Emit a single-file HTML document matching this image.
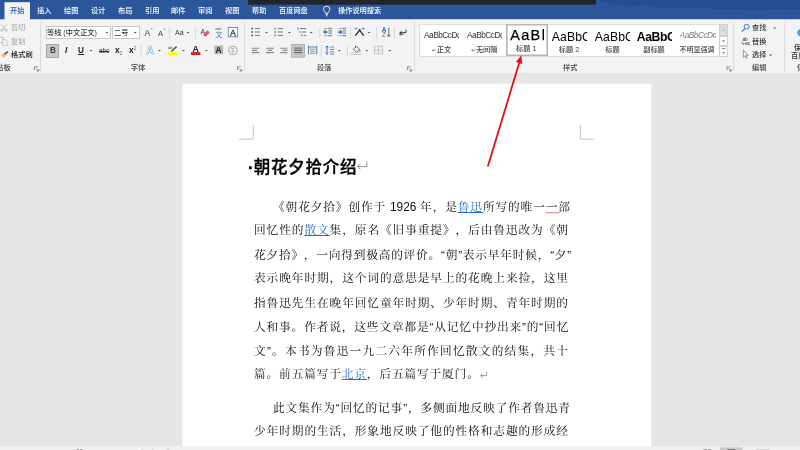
<!DOCTYPE html>
<html lang="zh-CN">
<head>
<meta charset="utf-8">
<title>朝花夕拾介绍 - Word</title>
<style>
html,body{margin:0;padding:0;}
*{-webkit-font-smoothing:antialiased;}
.rt,.tab,.glabel,.h1,.ln,.sty,svg{will-change:transform;}
body{width:800px;height:450px;overflow:hidden;position:relative;background:#e6e6e6;font-family:"Liberation Sans","Noto Sans CJK SC",sans-serif;color:#333;}
.abs{position:absolute;}
.tab{position:absolute;top:5.8px;font-weight:500;font-size:7.2px;line-height:10px;color:#fff;white-space:nowrap;}
.tab.on{color:#2b579a;}
.sep{position:absolute;width:1px;background:#d2d2d2;}
.glabel{position:absolute;top:63.2px;font-weight:500;font-size:7.2px;line-height:10px;color:#444;white-space:nowrap;}
.rt{position:absolute;font-weight:500;font-size:7.2px;line-height:10px;color:#333;white-space:nowrap;}

.dis{color:#b2b2b2;}
.box{position:absolute;background:#fff;border:0.8px solid #c8c8c8;box-sizing:border-box;}
.pressed{position:absolute;background:#c8c8c8;border:0.8px solid #a6a6a6;box-sizing:border-box;}
#gallery{position:absolute;left:419.2px;top:23.6px;width:308px;height:33.8px;background:#fff;border:0.6px solid #dedede;box-sizing:border-box;}
.sty{position:absolute;top:24.4px;width:40.4px;height:32px;overflow:hidden;}
.sty.sel{border:0;padding:1.6px;box-shadow:inset 0 0 0 1.6px #b7b7b7;background:#fff;box-sizing:border-box;}
.sty .pv{position:absolute;white-space:nowrap;overflow:hidden;line-height:12px;font-family:"Liberation Sans",sans-serif;}
.sty .nm{font-weight:500;position:absolute;left:0;width:100%;top:20.6px;text-align:center;font-size:7.2px;line-height:10px;color:#444;white-space:nowrap;}
.sty .ar{font-family:"DejaVu Sans",sans-serif;font-size:5px;color:#4a4a4a;position:relative;left:1.6px;}
.gsb{position:absolute;left:719.4px;width:8.2px;background:#fff;border:0.6px solid #d0d0d0;box-sizing:border-box;}
.h1{position:absolute;left:247.8px;top:155.2px;font:500 16.5px/24px "Liberation Sans","Noto Sans CJK SC",sans-serif;color:#000;white-space:nowrap;-webkit-text-stroke:0.35px #000;letter-spacing:0.75px;}
.h1 .dot{font-weight:900;letter-spacing:0.3px;}
.ln{position:absolute;left:254.2px;width:314.85px;height:24px;letter-spacing:0.85px;font:11.7px/24px "Liberation Serif","Noto Serif CJK SC",serif;color:#0d0d0d;white-space:nowrap;text-align:justify;text-align-last:justify;text-spacing-trim:space-all;}
.ln a{color:#1f6ec4;text-decoration:underline;}
.ln .q{font-family:"Liberation Sans",sans-serif;}
.ln .n{font-family:"Liberation Sans",sans-serif;display:inline-block;letter-spacing:0;font-size:13.2px;transform:scaleX(0.9);transform-origin:0 50%;margin-right:-2.95px;}
</style>
</head>
<body>
<svg id="bg" class="abs" style="left:0;top:0" width="800" height="450" viewBox="0 0 800 450">
<rect x="0" y="0" width="800" height="19.5" fill="#2b579a"/>
<rect x="0" y="19.5" width="800" height="53.3" fill="#f3f3f3"/>
<rect x="4.5" y="2.2" width="25.5" height="18" fill="#f3f3f3"/>
<rect x="248" y="0" width="348" height="4.7" fill="#23252e"/>
<rect x="182.5" y="83.7" width="468.7" height="363" fill="#ffffff"/>
<rect x="0" y="446.4" width="800" height="4" fill="#f1f1f1"/>
</svg>
<span class="tab on" style="left:10.0px">开始</span>
<span class="tab" style="left:36.9px">插入</span>
<span class="tab" style="left:63.8px">绘图</span>
<span class="tab" style="left:90.7px">设计</span>
<span class="tab" style="left:117.6px">布局</span>
<span class="tab" style="left:144.5px">引用</span>
<span class="tab" style="left:171.4px">邮件</span>
<span class="tab" style="left:198.3px">审阅</span>
<span class="tab" style="left:225.2px">视图</span>
<span class="tab" style="left:252.1px">帮助</span>
<span class="tab" style="left:279.0px">百度网盘</span>
<span class="tab" style="left:337.5px">操作说明搜索</span>

<!-- clipboard group -->
<span class="rt dis" style="left:11px;top:23px">剪切</span>
<span class="rt dis" style="left:11px;top:36.8px">复制</span>
<span class="rt" style="left:11px;top:50px;color:#222">格式刷</span>
<span class="glabel" style="left:-11.2px">剪贴板</span>
<!-- font group -->
<div class="box" style="left:46px;top:26px;width:64.5px;height:13.4px"></div>
<span class="rt" style="left:47.4px;top:27.8px">等线 (中文正文)</span>
<div class="box" style="left:112.2px;top:26px;width:27.5px;height:13.4px"></div>
<span class="rt" style="left:113.8px;top:27.8px">二号</span>
<span class="rt" style="left:174.6px;top:27.6px;font-size:7px">Aa</span>
<div class="pressed" style="left:46px;top:44px;width:12.8px;height:13.5px"></div>
<span class="rt" style="left:49.6px;top:45.6px;font-size:8.2px;font-weight:bold;color:#3a3a3a">B</span>
<span class="rt" style="left:65px;top:45.6px;font-size:8.2px;font-weight:bold;font-style:italic;color:#222">I</span>
<span class="rt" style="left:77.6px;top:45.6px;font-size:8.2px;font-weight:bold;color:#222;text-decoration:underline">U</span>
<span class="rt" style="left:98.6px;top:46px;font-size:6.4px;color:#333;text-decoration:line-through">abc</span>
<span class="rt" style="left:115px;top:45.4px;font-size:8.4px;font-weight:bold;color:#222">x<span style="font-size:4.5px;font-weight:normal;color:#2b6cc4;position:relative;top:1.5px">2</span></span>
<span class="rt" style="left:129px;top:45.4px;font-size:8.4px;font-weight:bold;color:#222">x<span style="font-size:4.5px;font-weight:normal;color:#2b6cc4;position:relative;top:-3.5px">2</span></span>
<span class="glabel" style="left:130.6px">字体</span>
<span class="glabel" style="left:317.2px">段落</span>
<span class="glabel" style="left:562.5px">样式</span>
<span class="glabel" style="left:752.2px">编辑</span>
<!-- edit group -->
<span class="rt" style="left:752.2px;top:23.2px">查找</span>
<span class="rt" style="left:752.2px;top:36.5px">替换</span>
<span class="rt" style="left:752.2px;top:50.2px">选择</span>
<span class="rt" style="left:794.4px;top:42.8px">保存</span>
<span class="rt" style="left:790.8px;top:51.2px">百度</span>
<span class="glabel" style="left:797px">保存</span>

<div id="gallery"></div>
<div class="sty" style="left:421px"><span class="pv" style="font-size:8.3px;letter-spacing:-0.5px;left:3px;top:5.2px;width:35.4px;color:#333">AaBbCcDd</span><span class="nm" style="left:-0.4px"><span class="ar">↵</span> 正文</span></div>
<div class="sty" style="left:464px"><span class="pv" style="font-size:8.3px;letter-spacing:-0.5px;left:3px;top:5.2px;width:35px;color:#333">AaBbCcDd</span><span class="nm" style="left:-0.6px"><span class="ar">↵</span> 无间隔</span></div>
<div class="sty sel" style="left:505.6px;top:24.4px;width:42.2px;height:31.9px"><span class="pv" style="font-size:14.5px;letter-spacing:1.35px;left:4.2px;top:-0.5px;width:33.8px;color:#000;line-height:22px;-webkit-text-stroke:0.25px #000">AaBb</span><span class="nm" style="top:20px;left:-0.8px">标题 1</span></div>
<div class="sty" style="left:549px"><span class="pv" style="font-size:12.2px;letter-spacing:0.1px;left:2.8px;top:5.2px;width:35px;color:#000;line-height:16px">AaBbCc</span><span class="nm" style="left:-0.2px">标题 2</span></div>
<div class="sty" style="left:591.5px"><span class="pv" style="font-size:12.2px;letter-spacing:0.1px;left:2.8px;top:5.2px;width:35px;color:#000;line-height:16px">AaBbCc</span><span class="nm" style="left:0.2px">标题</span></div>
<div class="sty" style="left:634px"><span class="pv" style="font-size:12.2px;left:2.8px;top:5.2px;width:35px;color:#000;line-height:16px;font-weight:bold;letter-spacing:-0.4px">AaBbCc</span><span class="nm" style="left:-0.2px">副标题</span></div>
<div class="sty" style="left:676.5px"><span class="pv" style="font-size:8.3px;letter-spacing:-0.5px;left:2.6px;top:5.2px;width:36px;color:#7c7c7c;font-style:italic">AaBbCcDd</span><span class="nm" style="left:-0.2px;font-size:7.05px">不明显强调</span></div>
<div class="gsb" style="top:23.8px;height:11.8px;background:#dcdcdc"></div>
<div class="gsb" style="top:35.6px;height:10.6px"></div>
<div class="gsb" style="top:46.2px;height:11px"></div>
<svg id="icons" class="abs" style="left:0;top:0" width="800" height="75" viewBox="0 0 800 75" font-family="Liberation Sans, sans-serif">
<!-- title bar clouds -->
<path d="M597 0H800V9.2C790 10.4 778 8.2 768 9.4C756 10.6 742 8.8 730 9.6C718 10.2 706 7.4 694 8.2C682 8.8 668 7.6 658 7.8C650 7.2 648 4.2 640 5.4C630 6.6 618 5.6 610 3.4C604 2 600 0.8 597 0Z" fill="#254a8c" opacity="0.75"/>
<!-- lightbulb -->
<g fill="none" stroke="#fff" stroke-width="0.9">
<path d="M325.4 13.2 C325.2 12 323.6 11 323.6 9.2 A3.1 3.1 0 0 1 329.8 9.2 C329.8 11 328.2 12 328 13.2 Z"/>
<path d="M325.6 14.5 H327.8 M326 15.8 H327.4"/>
</g>
<!-- separators -->
<g stroke="#d6d6d6" stroke-width="0.9" fill="none">
<path d="M40.6 22.5V71 M244.6 22.5V71 M414.6 22.5V71 M733.8 22.5V71 M784.6 22.5V71"/>
<path d="M169.4 27V38.6 M195.4 27V38.6 M319.8 27V38.6 M350.6 27V38.6 M376.5 27V38.6 M394.4 27V38.6"/>
<path d="M141.2 45V56.4 M321.2 45V56.4 M347.5 45V56.4"/>
</g>
<!-- dropdown arrows -->
<g fill="#555">
<path id="dd" d="M-1.45 -0.7 H1.45 L0 0.85 Z" transform="translate(106.9 32.6)"/>
<use href="#dd" x="28.35" y="0"/>
<use href="#dd" x="81.1" y="0"/>
<use href="#dd" x="159.6" y="0"/>
<use href="#dd" x="182.5" y="0"/>
<use href="#dd" x="204.35" y="0"/>
<use href="#dd" x="262.1" y="0"/>
<use href="#dd" x="-15.9" y="18"/>
<use href="#dd" x="52.5" y="18"/>
<use href="#dd" x="76.6" y="18"/>
<use href="#dd" x="99.6" y="18"/>
<use href="#dd" x="232.5" y="18"/>
<use href="#dd" x="259.8" y="18"/>
<use href="#dd" x="282.85" y="18"/>
<use href="#dd" x="667.85" y="-4.4"/>
<use href="#dd" x="663.7" y="22.7"/>
<!-- gallery scroll arrows -->
<use href="#dd" x="616.6" y="8.6" />
<use href="#dd" x="616.6" y="20.4" />
</g>
<path d="M721.6 48.6H725.4" stroke="#555" stroke-width="0.7"/>
<path d="M-1.5 0.8 H1.5 L0 -0.8 Z" transform="translate(723.5 29.6)" fill="#b8b8b8"/>
<!-- dialog launchers -->
<g fill="none" stroke="#666" stroke-width="0.7">
<path id="dl" d="M0 3.4V0H3.4 M1.6 1.6L4.2 4.2 M4.3 2.2V4.3H2.2" transform="translate(34.4 66.8)"/>
<use href="#dl" x="203" y="0"/>
<use href="#dl" x="373" y="0"/>
<use href="#dl" x="692.6" y="0"/>
</g>
<!-- scissors (disabled) -->
<g fill="none" stroke="#b9b9b9" stroke-width="0.9">
<path d="M1.4 24.4L5.6 29.4 M6.6 24.4L2.4 29.4"/>
<circle cx="1.9" cy="30.2" r="1.1"/><circle cx="6.1" cy="30.2" r="1.1"/>
</g>
<!-- copy (disabled) -->
<g fill="#f3f3f3" stroke="#b9b9b9" stroke-width="0.8">
<path d="M-0.5 37.4H3.6V43H-0.5Z"/>
<path d="M2.6 39.6H5.4L7.2 41.4V45.6H2.6Z"/>
</g>
<!-- format painter -->
<path d="M1.2 55.4L3.6 53L6 55.4L3.8 57.8Z" fill="#f0b64a"/>
<path d="M4.6 54.2L7.8 51.6" stroke="#444" stroke-width="1.5" fill="none"/>
<!-- grow / shrink font -->
<text x="144.4" y="36" font-size="8.6" fill="#444">A</text>
<path d="M150.7 29.4L151.6 28.3L152.5 29.4" fill="none" stroke="#3a5f96" stroke-width="0.6"/>
<text x="157.9" y="36" font-size="7.6" fill="#444">A</text>
<path d="M163.6 28.4L164.5 29.5L165.4 28.4" fill="none" stroke="#3a5f96" stroke-width="0.6"/>
<!-- clear formatting -->
<text x="200.6" y="34" font-size="7" fill="#333">A</text>
<path d="M207.4 30.2L209.8 32.6L205.4 37L203 34.6Z" fill="#ea5a78"/>
<!-- phonetic guide -->
<text x="215.2" y="30.2" font-size="3.4" fill="#444">wén</text>
<text x="215.4" y="36.8" font-size="6.8" fill="#3b78c8" font-family="Liberation Sans, Noto Sans CJK SC, sans-serif">文</text>
<!-- char border -->
<rect x="228.3" y="27.5" width="9.3" height="9.3" fill="#fff" stroke="#5a8fcf" stroke-width="0.9"/>
<text x="232.95" y="35.5" font-size="8.8" fill="#222" stroke="#222" stroke-width="0.25" text-anchor="middle">A</text>
<!-- text effects A -->
<text x="150" y="53.9" font-size="10" font-weight="bold" fill="#fff" stroke="#5d98de" stroke-width="0.5" text-anchor="middle">A</text>
<!-- highlight -->
<text x="168" y="48.6" font-size="4" fill="#333">ab</text>
<path d="M176.6 46.6L171.4 51.6" stroke="#444" stroke-width="1.4" fill="none"/>
<rect x="168" y="52.3" width="9.5" height="3" fill="#ffff00"/>
<!-- font color -->
<text x="195.8" y="51.6" font-size="8.8" font-weight="bold" fill="#222" text-anchor="middle">A</text>
<rect x="191" y="52.1" width="9.3" height="2.9" fill="#d8202a"/>
<!-- char shading -->
<rect x="214.4" y="45.6" width="8.6" height="8.5" fill="#b4b4b4"/>
<text x="218.7" y="53" font-size="8.6" font-weight="bold" fill="#222" text-anchor="middle">A</text>
<!-- enclosed char -->
<circle cx="232.9" cy="50.4" r="4.1" fill="none" stroke="#7c7c7c" stroke-width="0.7"/>
<text x="232.9" y="52.3" font-size="4.8" fill="#777" text-anchor="middle" font-family="Liberation Sans, Noto Sans CJK SC, sans-serif">字</text>
<!-- bullets -->
<g fill="#3c4a5e"><rect x="251.3" y="27.8" width="1.6" height="1.6"/><rect x="251.3" y="31.2" width="1.6" height="1.6"/><rect x="251.3" y="34.6" width="1.6" height="1.6"/></g>
<path d="M254.8 28.6H260 M254.8 32H260 M254.8 35.4H260" stroke="#7a7a7a" stroke-width="1"/>
<!-- numbering -->
<g fill="#2b6cc4"><rect x="274.6" y="27.6" width="0.9" height="2.2"/><rect x="274.6" y="31" width="0.9" height="2.2"/><rect x="274.6" y="34.4" width="0.9" height="2.2"/></g>
<path d="M277.6 28.6H283 M277.6 32H283 M277.6 35.4H283" stroke="#7a7a7a" stroke-width="1"/>
<!-- multilevel -->
<g fill="#2b6cc4"><rect x="297.6" y="27.6" width="0.9" height="2.2"/><rect x="299.6" y="31" width="0.9" height="2"/><rect x="301.4" y="34.4" width="0.9" height="2"/></g>
<path d="M300 28.6H306.2 M302 32H306.2 M303.8 35.4H306.2" stroke="#7a7a7a" stroke-width="1"/>
<!-- decrease indent -->
<path d="M323.6 28.5H332 M323.6 35.6H332" stroke="#b0b0b0" stroke-width="0.9"/><path d="M328.4 28.5H332 M328.4 30.9H332 M328.4 33.2H332 M328.4 35.6H332" stroke="#8e8e8e" stroke-width="1.3"/>
<path d="M327.8 32.05H324 M325.8 30.2L323.9 32.05L325.8 33.9" stroke="#2b6cc4" stroke-width="1.2" fill="none"/>
<!-- increase indent -->
<path d="M337.8 28.5H346.2 M337.8 35.6H346.2" stroke="#b0b0b0" stroke-width="0.9"/><path d="M342.6 28.5H346.2 M342.6 30.9H346.2 M342.6 33.2H346.2 M342.6 35.6H346.2" stroke="#8e8e8e" stroke-width="1.3"/>
<path d="M337.8 32.05H341.6 M339.8 30.2L341.7 32.05L339.8 33.9" stroke="#2b6cc4" stroke-width="1.2" fill="none"/>
<!-- chinese layout -->
<path d="M355.4 35.6L360.2 29.4 M363.8 35.6L359 29.4" stroke="#222" stroke-width="1.3" fill="none"/>
<path d="M357.6 28.6H355 M356 27.6L355 28.6L356 29.6 M361.6 28.6H364.2 M363.2 27.6L364.2 28.6L363.2 29.6" stroke="#2b6cc4" stroke-width="0.7" fill="none"/>
<!-- sort -->
<text x="381.8" y="32" font-size="6.4" font-weight="bold" fill="#2b6cc4">A</text>
<text x="382" y="37.2" font-size="6.4" fill="#5a6a84">Z</text>
<path d="M388.8 27.8V36.6 M387.2 34.8L388.8 36.6L390.4 34.8" stroke="#444" stroke-width="0.8" fill="none"/>
<!-- show marks -->
<path d="M406 29.6V32.6H400 M401.6 31L400 32.6L401.6 34.2 M403.8 34.2H399.6 M400.8 33.2L399.6 34.2L400.8 35.2" stroke="#333" stroke-width="0.9" fill="none"/>
<!-- align left/center/right -->
<path d="M251.9 48.2H259.4 M251.9 50.4H257 M251.9 52.6H259.4" stroke="#8a8a8a" stroke-width="1.1"/>
<path d="M266 48.2H274 M267.6 50.4H272.4 M266 52.6H274" stroke="#8a8a8a" stroke-width="1.1"/>
<path d="M280.2 48.2H287.5 M282.6 50.4H287.5 M280.2 52.6H287.5" stroke="#8a8a8a" stroke-width="1.1"/>
<!-- justify (pressed) -->
<rect x="291.6" y="44.4" width="12.8" height="12.8" fill="#c8c8c8" stroke="#a8a8a8" stroke-width="0.8"/>
<path d="M294 48.2H302.2 M294 50.4H302.2 M294 52.6H302.2" stroke="#6e6e6e" stroke-width="1.2"/>
<!-- distributed -->
<path d="M308.5 45.8V54.4 M316.8 45.8V54.4 M308.5 47H316.8" stroke="#4273b4" stroke-width="0.9" fill="none"/>
<path d="M310 49.2H315.4 M310 51.2H315.4 M310 53.2H315.4" stroke="#8a8a8a" stroke-width="0.9"/>
<!-- line spacing -->
<path d="M327 46V54.2 M325.6 47.6L327 46L328.4 47.6 M325.6 52.6L327 54.2L328.4 52.6" stroke="#2b6cc4" stroke-width="0.9" fill="none"/>
<path d="M330 47H334.2 M330 49.4H334.2 M330 51.8H334.2 M330 54H334.2" stroke="#7a7a7a" stroke-width="0.9"/>
<!-- shading bucket -->
<path d="M353.4 49.2L356.4 46.2L359.6 49.4L356.4 52.2Z" fill="#fff" stroke="#444" stroke-width="0.8"/>
<path d="M355.6 45.6V48" stroke="#444" stroke-width="0.7"/>
<path d="M359.8 49.4C360.6 50.4 360.8 51.2 359.9 51.6C359 51.2 359.2 50.4 359.8 49.4Z" fill="#2b6cc4"/>
<rect x="351.8" y="52.9" width="8.8" height="1.8" fill="#fff" stroke="#9a9a9a" stroke-width="0.5"/>
<!-- borders -->
<path d="M374.6 46.2H382.6V53.8H374.6Z M378.6 46.2V53.8 M374.6 50H382.6" fill="none" stroke="#b4b4b4" stroke-width="0.7"/>
<!-- find -->
<circle cx="746.7" cy="26.7" r="2.5" fill="none" stroke="#2f6fbe" stroke-width="0.9"/>
<path d="M744.8 28.7L741.9 31.6" stroke="#2f6fbe" stroke-width="1.15"/>
<!-- replace -->
<text x="742.4" y="40.8" font-size="4.8" fill="#222">ab</text>
<text x="745" y="45.2" font-size="4.8" fill="#222">ac</text>
<path d="M742 41.8V43.8H744.2 M743.3 42.9L744.2 43.8L743.3 44.7" stroke="#2b6cc4" stroke-width="0.7" fill="none"/>
<!-- select -->
<path d="M743.3 50.2V57.2L745 55.7L746.2 58.4L747.2 57.9L746 55.3H748.2Z" fill="#fff" stroke="#555" stroke-width="0.6"/>
<!-- save to baidu -->
<circle cx="801" cy="32.6" r="3.8" fill="#3fa9ea"/>
</svg>


<div class="h1"><span class="dot">·</span>朝花夕拾介绍</div>

<div class="ln" style="top:195px;left:273px;width:297.85px">《朝花夕拾》创作于 <span class="n">1926</span> 年，是<a>鲁迅</a>所写的唯一一部</div>
<div class="ln" style="top:219px">回忆性的<a>散文</a>集，原名《旧事重提》，后由鲁迅改为《朝</div>
<div class="ln" style="top:243px;letter-spacing:0.78px">花夕拾》，一向得到极高的评价。<span class="q">“</span>朝<span class="q">”</span>表示早年时候，<span class="q">“</span>夕<span class="q">”</span></div>
<div class="ln" style="top:267px">表示晚年时期，这个词的意思是早上的花晚上来捡，这里</div>
<div class="ln" style="top:291.5px">指鲁迅先生在晚年回忆童年时期、少年时期、青年时期的</div>
<div class="ln" style="top:315px">人和事。作者说，这些文章都是<span class="q">“</span>从记忆中抄出来<span class="q">”</span>的<span class="q">“</span>回忆</div>
<div class="ln" style="top:339px">文<span class="q">”</span>。本书为鲁迅一九二六年所作回忆散文的结集，共十</div>
<div class="ln" style="top:363px;text-align-last:left">篇。前五篇写于<a>北京</a>，后五篇写于厦门。</div>
<div class="ln" style="top:395.5px;left:273px;width:297.85px">此文集作为<span class="q">“</span>回忆的记事<span class="q">”</span>，多侧面地反映了作者鲁迅青</div>
<div class="ln" style="top:420px">少年时期的生活，形象地反映了他的性格和志趣的形成经</div>
<svg id="overlay" class="abs" style="left:0;top:0;pointer-events:none" width="800" height="450" viewBox="0 0 800 450">
<!-- crop marks -->
<path d="M253.3 125V139.2H238.9 M580.4 125V139.2H594.2" fill="none" stroke="#c6c6c6" stroke-width="1"/>
<!-- heading paragraph mark -->
<path d="M366.8 161.4V166.6H357.8 M360.4 164L357.6 166.6L360.4 169.2" fill="none" stroke="#7f7f7f" stroke-width="0.9"/>
<!-- spelling squiggle -->
<path d="M545.4 213.2L546.7 212.0L548.0 213.4L549.3 212.0L550.6 213.4L551.9 212.0L553.2 213.4L554.5 212.0L555.8 213.4L557.1 212.0L558.4 213.4L559.7 212.0" fill="none" stroke="#e23a3a" stroke-width="0.7"/>
<!-- paragraph mark line 8 -->
<path d="M486.6 371.8V375.6H480.8 M482.8 373.7L480.6 375.6L482.8 377.5" fill="none" stroke="#7d7d7d" stroke-width="0.8"/>
<!-- status bar hints -->
<rect x="720" y="447.4" width="22.6" height="3" fill="#c9c9c9"/>
<path d="M727.6 449.6H735.4" stroke="#6a6a6a" stroke-width="0.9"/>
<path d="M76.4 449.7H79 M80 449.7H82.4 M703.8 449.7H706.6 M708 449.7H710.8" stroke="#777" stroke-width="0.8"/>
<path d="M141 449.8H144 M152 449.8H154 M166 449.8H169 M756 449.8H770" stroke="#b5b5b5" stroke-width="0.6"/>
<!-- red arrow -->
<path d="M487.8 166.5L519.3 62.6" stroke="#e50f1a" stroke-width="1.8" fill="none"/>
<path d="M521.3 55.2L515.9 62L522.3 63.9Z" fill="#ee1018"/>
</svg>
</body>
</html>
